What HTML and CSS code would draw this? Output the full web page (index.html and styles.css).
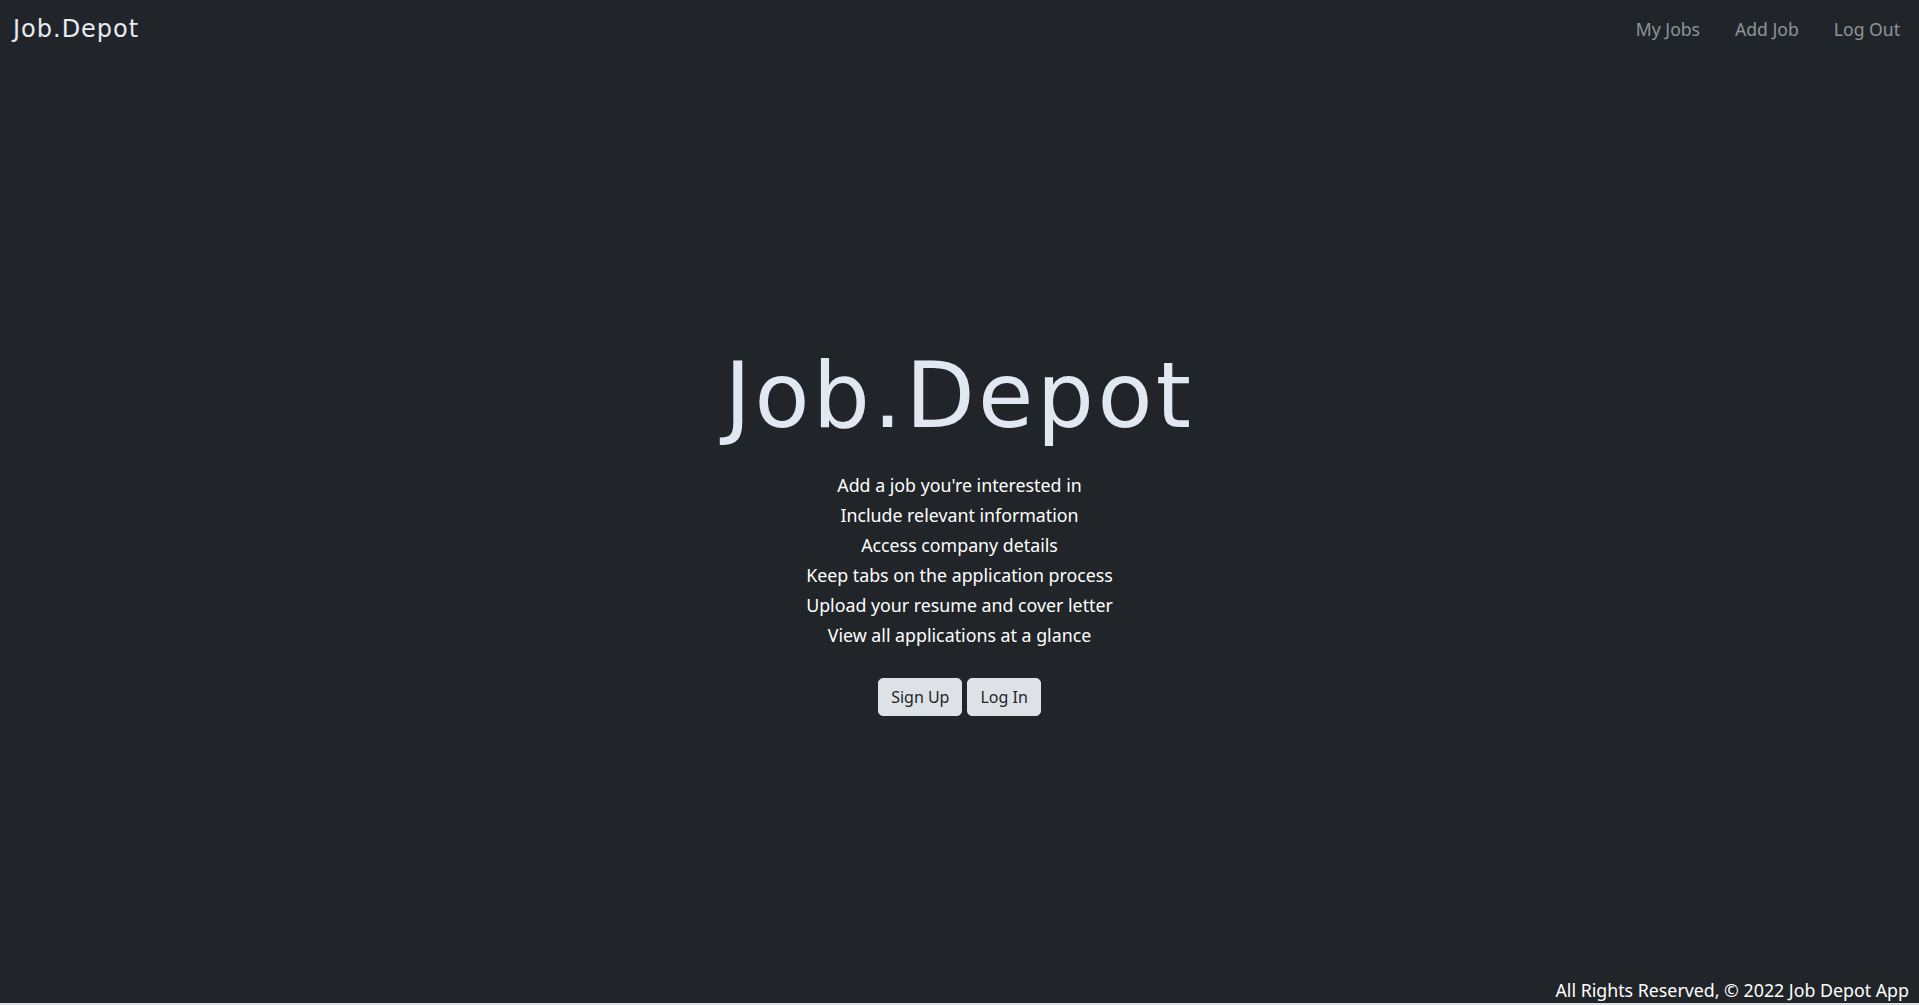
FILE: index.html
```html
<!DOCTYPE html>
<html lang="en">
<head>
<meta charset="utf-8">
<title>Job.Depot</title>
<link rel="stylesheet" href="styles.css">
</head>
<body>
<div class="page">
  <nav class="navbar">
    <a class="brand" href="#">Job.Depot</a>
    <ul class="nav-links">
      <li><a href="#">My Jobs</a></li>
      <li><a href="#">Add Job</a></li>
      <li><a href="#">Log Out</a></li>
    </ul>
  </nav>
  <main class="hero">
    <h1 class="hero-title">Job.Depot</h1>
    <ul class="features">
      <li>Add a job you're interested in</li>
      <li>Include relevant information</li>
      <li>Access company details</li>
      <li>Keep tabs on the application process</li>
      <li>Upload your resume and cover letter</li>
      <li>View all applications at a glance</li>
    </ul>
    <div class="actions">
      <button class="btn">Sign Up</button>
      <button class="btn">Log In</button>
    </div>
  </main>
  <footer class="footer">All Rights Reserved, © 2022 Job Depot App</footer>
</div>
</body>
</html>
```

FILE: styles.css
```css
html, body {
  margin: 0;
  padding: 0;
}
body {
  background: #dee2e6;
  font-family: "Noto Sans", "Open Sans", sans-serif;
  height: 1005px;
  overflow: hidden;
}
.page {
  background: #212529;
  height: 1003px;
  display: flex;
  flex-direction: column;
  color: #fff;
}
.navbar {
  display: flex;
  justify-content: space-between;
  align-items: center;
  height: 58px;
  padding: 0 19px 0 13px;
}
.brand {
  font-family: "DejaVu Sans", sans-serif;
  font-size: 24px;
  color: #e6ebf3;
  text-decoration: none;
  letter-spacing: 1px;
}
.nav-links {
  list-style: none;
  display: flex;
  gap: 35px;
  margin: 0;
  padding: 0;
}
.nav-links a {
  color: #8f949a;
  text-decoration: none;
  font-size: 17.6px;
}
.hero {
  flex: 1;
  display: flex;
  flex-direction: column;
  align-items: center;
  padding-top: 284px;
}
.hero-title {
  font-family: "DejaVu Sans", sans-serif;
  font-weight: 400;
  font-size: 90px;
  line-height: 108px;
  margin: 0;
  color: #e2e8f2;
  letter-spacing: 3.4px;
}
.features {
  list-style: none;
  margin: 20px 0 0;
  padding: 0;
  text-align: center;
  font-size: 17.8px;
  line-height: 30px;
}
.actions {
  display: flex;
  gap: 5px;
  margin-top: 28px;
}
.btn {
  font-family: "Noto Sans", sans-serif;
  font-size: 16px;
  line-height: 24px;
  padding: 6px 12px;
  border: 1px solid #dee2e6;
  border-radius: 5px;
  background: #dee2e6;
  color: #212529;
}
.footer {
  text-align: right;
  font-size: 17.8px;
  line-height: 24px;
  padding: 0 10px 1px 0;
}
```
